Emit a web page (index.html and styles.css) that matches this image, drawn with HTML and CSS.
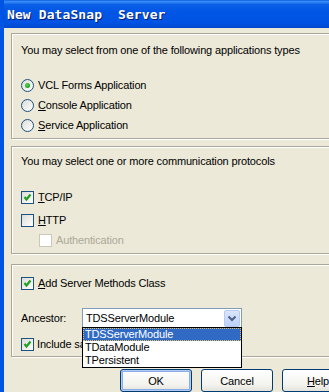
FILE: index.html
```html
<!DOCTYPE html>
<html>
<head>
<meta charset="utf-8">
<link rel="stylesheet" href="styles.css">
</head>
<body>
<div class="window">
  <div class="titlebar"><span class="title">New DataSnap  Server</span></div>
  <div class="content">
    <div class="group g1">
      <div class="heading">You may select from one of the following applications types</div>
      <div class="opts">
        <div class="row"><span class="radio checked"></span><span>VCL Forms Application</span></div>
        <div class="row"><span class="radio"></span><span><u>C</u>onsole Application</span></div>
        <div class="row"><span class="radio"></span><span><u>S</u>ervice Application</span></div>
      </div>
    </div>
    <div class="group g2">
      <div class="heading">You may select one or more communication protocols</div>
      <div class="row r-tcp"><span class="check checked"><svg viewBox="0 0 11 11" width="11" height="11"><polyline points="2.5,5 4.5,7.5 8.5,2.5" fill="none" stroke="#21a121" stroke-width="2.2"/></svg></span><span><u>T</u>CP/IP</span></div>
      <div class="row r-http"><span class="check"></span><span><u>H</u>TTP</span></div>
      <div class="row r-auth disabled"><span class="check"></span><span>Authentication</span></div>
    </div>
    <div class="group g3">
      <div class="row r-add"><span class="check checked"><svg viewBox="0 0 11 11" width="11" height="11"><polyline points="2.5,5 4.5,7.5 8.5,2.5" fill="none" stroke="#21a121" stroke-width="2.2"/></svg></span><span><u>A</u>dd Server Methods Class</span></div>
      <div class="row r-anc">
        <span class="anc-label">Ancestor:</span>
        <div class="combo">
          <span class="combo-text">TDSServerModule</span>
          <span class="combo-btn"><svg viewBox="0 0 14 15" width="14" height="15"><polyline points="3.5,5.5 7,9 10.5,5.5" fill="none" stroke="#4d6185" stroke-width="2"/></svg></span>
          <div class="droplist">
            <div class="item sel"><span class="focus">TDSServerModule</span></div>
            <div class="item">TDataModule</div>
            <div class="item">TPersistent</div>
          </div>
        </div>
      </div>
      <div class="row r-inc"><span class="check checked"><svg viewBox="0 0 11 11" width="11" height="11"><polyline points="2.5,5 4.5,7.5 8.5,2.5" fill="none" stroke="#21a121" stroke-width="2.2"/></svg></span><span>Include sa</span></div>
    </div>
    <div class="buttons">
      <button class="btn default">OK</button>
      <button class="btn">Cancel</button>
      <button class="btn"><u>H</u>elp</button>
    </div>
  </div>
</div>
</body>
</html>
```

FILE: styles.css
```css
html, body {
  margin: 0;
  padding: 0;
  overflow: hidden;
  background: #ece9d8;
}
.window {
  width: 329px;
  height: 392px;
  overflow: hidden;
  box-sizing: border-box;
  border-left: 4px solid #0054e3;
  background: #ece9d8;
  font-family: "Liberation Sans", Arial, sans-serif;
  font-size: 11px;
  letter-spacing: -0.15px;
  color: #000;
}
.titlebar {
  height: 28px;
  margin-left: -4px;
  padding-left: 7px;
  display: flex;
  align-items: center;
  background: linear-gradient(#0a5fe0 0%, #3c8ef8 6%, #0a60e6 16%, #0055e5 45%, #0054e3 80%, #0048cf 100%);
}
.title {
  white-space: pre;
  font-family: "DejaVu Sans Mono", "Liberation Mono", monospace;
  font-weight: bold;
  font-size: 13px;
  letter-spacing: 0.1px;
  color: #fff;
  text-shadow: 1px 1px 0 #0a1a6e;
  margin-top: 1px;
}
.content {
  padding: 5px 0 0 7px;
  display: flex;
  flex-direction: column;
}
.group {
  border: 1px solid #aca899;
  box-shadow: inset 1px 1px 0 #fff, 1px 1px 0 #fff;
  margin-right: -20px;
  padding-left: 9px;
  display: flex;
  flex-direction: column;
}
.heading {
  height: 14px;
  line-height: 14px;
}
.row {
  height: 20px;
  display: flex;
  align-items: center;
  gap: 4px;
}
.g1 { padding-top: 9px; padding-bottom: 3px; }
.g1 .opts { margin-top: 18px; }
.g2 { margin-top: 7px; padding-top: 7px; padding-bottom: 3px; }
.r-tcp { margin-top: 19px; }
.r-http { margin-top: 3px; }
.r-auth { padding-left: 18px; }
.g3 { margin-top: 10px; padding-top: 8px; padding-bottom: 2px; }
.r-anc { margin-top: 15px; gap: 0; }
.r-inc { margin-top: 6px; gap: 3px; }

.radio {
  width: 13px;
  height: 13px;
  box-sizing: border-box;
  border-radius: 50%;
  border: 1px solid #1c5180;
  background: linear-gradient(135deg, #dcdcd7, #fff);
  display: flex;
  align-items: center;
  justify-content: center;
  flex: none;
}
.radio.checked::after {
  content: "";
  width: 5px;
  height: 5px;
  border-radius: 50%;
  background: radial-gradient(circle at 40% 40%, #55d551, #21a121 70%);
}
.check {
  width: 13px;
  height: 13px;
  box-sizing: border-box;
  border: 1px solid #1c5180;
  background: linear-gradient(135deg, #dcdcd7, #fff);
  display: flex;
  align-items: center;
  justify-content: center;
  flex: none;
}
.disabled { color: #aca899; }
.disabled .check {
  border-color: #cac8bb;
  background: #fff;
}
.anc-label { width: 61px; flex: none; }
.combo {
  position: relative;
  width: 160px;
  height: 20px;
  box-sizing: border-box;
  border: 1px solid #7f9db9;
  background: #fff;
  display: flex;
  align-items: center;
}
.combo-text { padding-left: 3px; flex: 1; }
.combo-btn {
  width: 16px;
  height: 17px;
  margin-right: 1px;
  box-sizing: border-box;
  border: 1px solid #b9cbf3;
  border-radius: 2px;
  background: linear-gradient(#dbe6fd, #bcd0fa);
  display: flex;
  align-items: center;
  justify-content: center;
}
.droplist {
  position: absolute;
  left: -1px;
  top: 18px;
  width: 160px;
  box-sizing: border-box;
  border: 1px solid #000;
  background: #fff;
  z-index: 2;
}
.item {
  height: 13px;
  line-height: 13px;
  padding-left: 2px;
}
.item.sel {
  background: #316ac5;
  color: #fff;
  padding-left: 0;
}
.focus {
  display: block;
  height: 13px;
  box-sizing: border-box;
  border: 1px dotted #e8c060;
  line-height: 11px;
  padding-left: 1px;
}
.buttons {
  margin-top: 12px;
  padding-left: 109px;
  display: flex;
  gap: 9px;
}
.btn {
  width: 72px;
  height: 23px;
  flex: none;
  box-sizing: border-box;
  border: 1px solid #003c74;
  border-radius: 3px;
  background: linear-gradient(#fff, #f3f3ef 70%, #e3e2da);
  font-family: "Liberation Sans", Arial, sans-serif;
  font-size: 11px;
  letter-spacing: -0.15px;
  color: #000;
  padding: 0;
}
.btn.default {
  box-shadow: inset 0 0 0 1px #b3cbf3, inset 0 0 0 2px #89ade4;
}
```
